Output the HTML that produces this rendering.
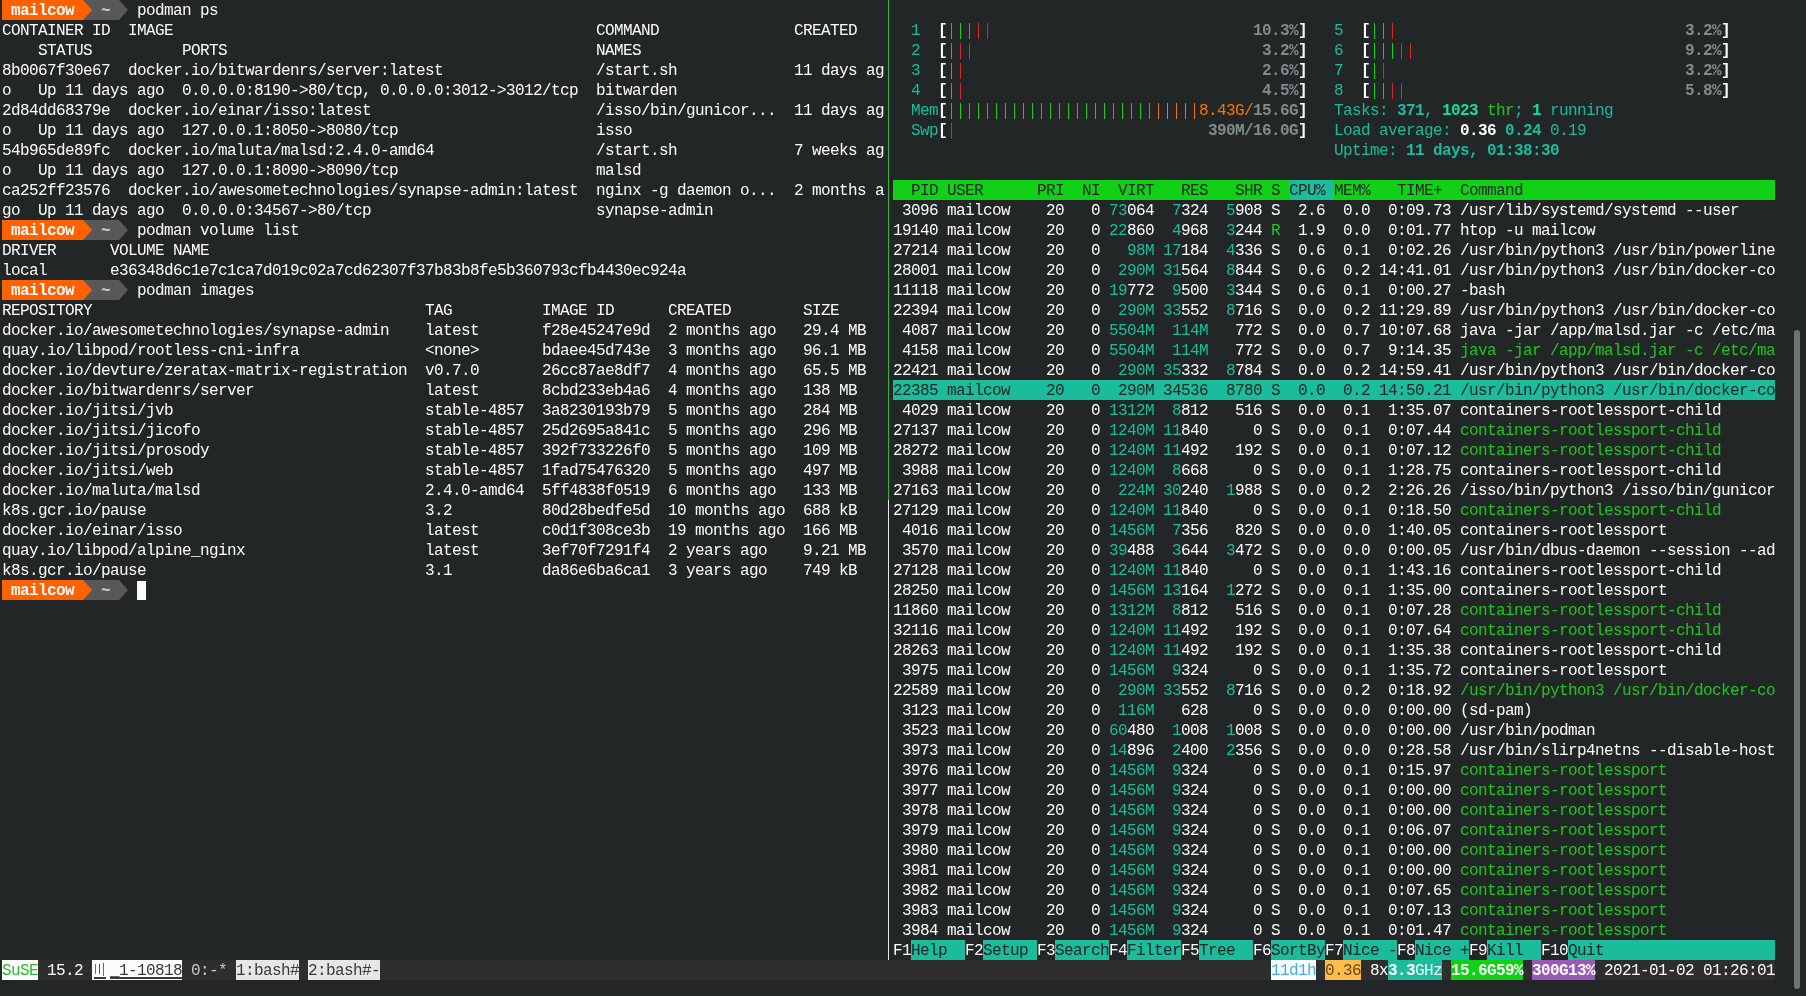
<!DOCTYPE html>
<html><head><meta charset="utf-8"><style>
html,body{margin:0;padding:0;background:#232627;width:1806px;height:996px;overflow:hidden}
body{position:relative;will-change:transform;font-family:"Liberation Mono",monospace;font-size:16px;letter-spacing:-0.6px;color:#fcfcfc}
i{position:absolute;height:20px;line-height:22px;white-space:pre;font-style:normal;overflow:visible}
b{position:absolute;display:block}
</style></head><body>
<b style="left:2px;top:0px;width:81px;height:20px;background:#ff6000"></b><i style="left:11px;top:0px;width:63px;font-weight:bold">mailcow</i><b style="left:83px;top:0px;width:36px;height:20px;background:#585858"></b><svg style="position:absolute;left:83px;top:0px" width="9" height="20"><polygon points="0,0 9,10 0,20" fill="#ff6000"/></svg><i style="left:101px;top:0px;width:9px;color:#d0d0d0;font-weight:bold">~</i><svg style="position:absolute;left:119px;top:0px" width="9" height="20"><polygon points="0,0 9,10 0,20" fill="#585858"/></svg><i style="left:137px;top:0px;width:81px">podman ps</i><i style="left:2px;top:20px;width:108px">CONTAINER ID</i><i style="left:128px;top:20px;width:45px">IMAGE</i><i style="left:596px;top:20px;width:63px">COMMAND</i><i style="left:794px;top:20px;width:63px">CREATED</i><i style="left:38px;top:40px;width:54px">STATUS</i><i style="left:182px;top:40px;width:45px">PORTS</i><i style="left:596px;top:40px;width:45px">NAMES</i><i style="left:2px;top:60px;width:108px">8b0067f30e67</i><i style="left:128px;top:60px;width:315px">docker.io/bitwardenrs/server:latest</i><i style="left:596px;top:60px;width:81px">/start.sh</i><i style="left:794px;top:60px;width:90px">11 days ag</i><i style="left:2px;top:80px;width:9px">o</i><i style="left:38px;top:80px;width:126px">Up 11 days ago</i><i style="left:182px;top:80px;width:396px">0.0.0.0:8190-&gt;80/tcp, 0.0.0.0:3012-&gt;3012/tcp</i><i style="left:596px;top:80px;width:81px">bitwarden</i><i style="left:2px;top:100px;width:108px">2d84dd68379e</i><i style="left:128px;top:100px;width:243px">docker.io/einar/isso:latest</i><i style="left:596px;top:100px;width:180px">/isso/bin/gunicor...</i><i style="left:794px;top:100px;width:90px">11 days ag</i><i style="left:2px;top:120px;width:9px">o</i><i style="left:38px;top:120px;width:126px">Up 11 days ago</i><i style="left:182px;top:120px;width:216px">127.0.0.1:8050-&gt;8080/tcp</i><i style="left:596px;top:120px;width:36px">isso</i><i style="left:2px;top:140px;width:108px">54b965de89fc</i><i style="left:128px;top:140px;width:306px">docker.io/maluta/malsd:2.4.0-amd64</i><i style="left:596px;top:140px;width:81px">/start.sh</i><i style="left:794px;top:140px;width:90px">7 weeks ag</i><i style="left:2px;top:160px;width:9px">o</i><i style="left:38px;top:160px;width:126px">Up 11 days ago</i><i style="left:182px;top:160px;width:216px">127.0.0.1:8090-&gt;8090/tcp</i><i style="left:596px;top:160px;width:45px">malsd</i><i style="left:2px;top:180px;width:108px">ca252ff23576</i><i style="left:128px;top:180px;width:450px">docker.io/awesometechnologies/synapse-admin:latest</i><i style="left:596px;top:180px;width:180px">nginx -g daemon o...</i><i style="left:794px;top:180px;width:90px">2 months a</i><i style="left:2px;top:200px;width:18px">go</i><i style="left:38px;top:200px;width:126px">Up 11 days ago</i><i style="left:182px;top:200px;width:189px">0.0.0.0:34567-&gt;80/tcp</i><i style="left:596px;top:200px;width:117px">synapse-admin</i><b style="left:2px;top:220px;width:81px;height:20px;background:#ff6000"></b><i style="left:11px;top:220px;width:63px;font-weight:bold">mailcow</i><b style="left:83px;top:220px;width:36px;height:20px;background:#585858"></b><svg style="position:absolute;left:83px;top:220px" width="9" height="20"><polygon points="0,0 9,10 0,20" fill="#ff6000"/></svg><i style="left:101px;top:220px;width:9px;color:#d0d0d0;font-weight:bold">~</i><svg style="position:absolute;left:119px;top:220px" width="9" height="20"><polygon points="0,0 9,10 0,20" fill="#585858"/></svg><i style="left:137px;top:220px;width:162px">podman volume list</i><i style="left:2px;top:240px;width:54px">DRIVER</i><i style="left:110px;top:240px;width:99px">VOLUME NAME</i><i style="left:2px;top:260px;width:45px">local</i><i style="left:110px;top:260px;width:576px">e36348d6c1e7c1ca7d019c02a7cd62307f37b83b8fe5b360793cfb4430ec924a</i><b style="left:2px;top:280px;width:81px;height:20px;background:#ff6000"></b><i style="left:11px;top:280px;width:63px;font-weight:bold">mailcow</i><b style="left:83px;top:280px;width:36px;height:20px;background:#585858"></b><svg style="position:absolute;left:83px;top:280px" width="9" height="20"><polygon points="0,0 9,10 0,20" fill="#ff6000"/></svg><i style="left:101px;top:280px;width:9px;color:#d0d0d0;font-weight:bold">~</i><svg style="position:absolute;left:119px;top:280px" width="9" height="20"><polygon points="0,0 9,10 0,20" fill="#585858"/></svg><i style="left:137px;top:280px;width:117px">podman images</i><i style="left:2px;top:300px;width:90px">REPOSITORY</i><i style="left:425px;top:300px;width:27px">TAG</i><i style="left:542px;top:300px;width:72px">IMAGE ID</i><i style="left:668px;top:300px;width:63px">CREATED</i><i style="left:803px;top:300px;width:36px">SIZE</i><i style="left:2px;top:320px;width:387px">docker.io/awesometechnologies/synapse-admin</i><i style="left:425px;top:320px;width:54px">latest</i><i style="left:542px;top:320px;width:108px">f28e45247e9d</i><i style="left:668px;top:320px;width:108px">2 months ago</i><i style="left:803px;top:320px;width:63px">29.4 MB</i><i style="left:2px;top:340px;width:297px">quay.io/libpod/rootless-cni-infra</i><i style="left:425px;top:340px;width:54px">&lt;none&gt;</i><i style="left:542px;top:340px;width:108px">bdaee45d743e</i><i style="left:668px;top:340px;width:108px">3 months ago</i><i style="left:803px;top:340px;width:63px">96.1 MB</i><i style="left:2px;top:360px;width:405px">docker.io/devture/zeratax-matrix-registration</i><i style="left:425px;top:360px;width:54px">v0.7.0</i><i style="left:542px;top:360px;width:108px">26cc87ae8df7</i><i style="left:668px;top:360px;width:108px">4 months ago</i><i style="left:803px;top:360px;width:63px">65.5 MB</i><i style="left:2px;top:380px;width:252px">docker.io/bitwardenrs/server</i><i style="left:425px;top:380px;width:54px">latest</i><i style="left:542px;top:380px;width:108px">8cbd233eb4a6</i><i style="left:668px;top:380px;width:108px">4 months ago</i><i style="left:803px;top:380px;width:54px">138 MB</i><i style="left:2px;top:400px;width:171px">docker.io/jitsi/jvb</i><i style="left:425px;top:400px;width:99px">stable-4857</i><i style="left:542px;top:400px;width:108px">3a8230193b79</i><i style="left:668px;top:400px;width:108px">5 months ago</i><i style="left:803px;top:400px;width:54px">284 MB</i><i style="left:2px;top:420px;width:198px">docker.io/jitsi/jicofo</i><i style="left:425px;top:420px;width:99px">stable-4857</i><i style="left:542px;top:420px;width:108px">25d2695a841c</i><i style="left:668px;top:420px;width:108px">5 months ago</i><i style="left:803px;top:420px;width:54px">296 MB</i><i style="left:2px;top:440px;width:207px">docker.io/jitsi/prosody</i><i style="left:425px;top:440px;width:99px">stable-4857</i><i style="left:542px;top:440px;width:108px">392f733226f0</i><i style="left:668px;top:440px;width:108px">5 months ago</i><i style="left:803px;top:440px;width:54px">109 MB</i><i style="left:2px;top:460px;width:171px">docker.io/jitsi/web</i><i style="left:425px;top:460px;width:99px">stable-4857</i><i style="left:542px;top:460px;width:108px">1fad75476320</i><i style="left:668px;top:460px;width:108px">5 months ago</i><i style="left:803px;top:460px;width:54px">497 MB</i><i style="left:2px;top:480px;width:198px">docker.io/maluta/malsd</i><i style="left:425px;top:480px;width:99px">2.4.0-amd64</i><i style="left:542px;top:480px;width:108px">5ff4838f0519</i><i style="left:668px;top:480px;width:108px">6 months ago</i><i style="left:803px;top:480px;width:54px">133 MB</i><i style="left:2px;top:500px;width:144px">k8s.gcr.io/pause</i><i style="left:425px;top:500px;width:27px">3.2</i><i style="left:542px;top:500px;width:108px">80d28bedfe5d</i><i style="left:668px;top:500px;width:117px">10 months ago</i><i style="left:803px;top:500px;width:54px">688 kB</i><i style="left:2px;top:520px;width:180px">docker.io/einar/isso</i><i style="left:425px;top:520px;width:54px">latest</i><i style="left:542px;top:520px;width:108px">c0d1f308ce3b</i><i style="left:668px;top:520px;width:117px">19 months ago</i><i style="left:803px;top:520px;width:54px">166 MB</i><i style="left:2px;top:540px;width:243px">quay.io/libpod/alpine_nginx</i><i style="left:425px;top:540px;width:54px">latest</i><i style="left:542px;top:540px;width:108px">3ef70f7291f4</i><i style="left:668px;top:540px;width:99px">2 years ago</i><i style="left:803px;top:540px;width:63px">9.21 MB</i><i style="left:2px;top:560px;width:144px">k8s.gcr.io/pause</i><i style="left:425px;top:560px;width:27px">3.1</i><i style="left:542px;top:560px;width:108px">da86e6ba6ca1</i><i style="left:668px;top:560px;width:99px">3 years ago</i><i style="left:803px;top:560px;width:54px">749 kB</i><b style="left:2px;top:580px;width:81px;height:20px;background:#ff6000"></b><i style="left:11px;top:580px;width:63px;font-weight:bold">mailcow</i><b style="left:83px;top:580px;width:36px;height:20px;background:#585858"></b><svg style="position:absolute;left:83px;top:580px" width="9" height="20"><polygon points="0,0 9,10 0,20" fill="#ff6000"/></svg><i style="left:101px;top:580px;width:9px;color:#d0d0d0;font-weight:bold">~</i><svg style="position:absolute;left:119px;top:580px" width="9" height="20"><polygon points="0,0 9,10 0,20" fill="#585858"/></svg><b style="left:137px;top:581px;width:9px;height:19px;background:#fcfcfc"></b><b style="left:888px;top:0px;width:1px;height:500px;background:#44a844"></b><b style="left:889px;top:0px;width:1px;height:500px;background:#0e4d0e"></b><b style="left:888px;top:500px;width:1px;height:460px;background:#e8e8e8"></b><i style="left:911px;top:20px;width:9px;color:#1abc9c">1</i><i style="left:938px;top:20px;width:9px;font-weight:bold">[</i><b style="left:951px;top:23px;width:1.3px;height:16px;background:#11d116"></b><b style="left:960px;top:23px;width:1.3px;height:16px;background:#11d116"></b><b style="left:969px;top:23px;width:1.3px;height:16px;background:#11d116"></b><b style="left:978px;top:23px;width:1.3px;height:16px;background:#d42a2a"></b><b style="left:987px;top:23px;width:1.3px;height:16px;background:#d42a2a"></b><i style="left:1253px;top:20px;width:45px;color:#7f8c8d;font-weight:bold">10.3%</i><i style="left:1298px;top:20px;width:9px;font-weight:bold">]</i><i style="left:911px;top:40px;width:9px;color:#1abc9c">2</i><i style="left:938px;top:40px;width:9px;font-weight:bold">[</i><b style="left:951px;top:43px;width:1.3px;height:16px;background:#11d116"></b><b style="left:960px;top:43px;width:1.3px;height:16px;background:#d42a2a"></b><b style="left:969px;top:43px;width:1.3px;height:16px;background:#d42a2a"></b><i style="left:1262px;top:40px;width:36px;color:#7f8c8d;font-weight:bold">3.2%</i><i style="left:1298px;top:40px;width:9px;font-weight:bold">]</i><i style="left:911px;top:60px;width:9px;color:#1abc9c">3</i><i style="left:938px;top:60px;width:9px;font-weight:bold">[</i><b style="left:951px;top:63px;width:1.3px;height:16px;background:#11d116"></b><b style="left:960px;top:63px;width:1.3px;height:16px;background:#d42a2a"></b><i style="left:1262px;top:60px;width:36px;color:#7f8c8d;font-weight:bold">2.6%</i><i style="left:1298px;top:60px;width:9px;font-weight:bold">]</i><i style="left:911px;top:80px;width:9px;color:#1abc9c">4</i><i style="left:938px;top:80px;width:9px;font-weight:bold">[</i><b style="left:951px;top:83px;width:1.3px;height:16px;background:#11d116"></b><b style="left:960px;top:83px;width:1.3px;height:16px;background:#d42a2a"></b><i style="left:1262px;top:80px;width:36px;color:#7f8c8d;font-weight:bold">4.5%</i><i style="left:1298px;top:80px;width:9px;font-weight:bold">]</i><i style="left:1334px;top:20px;width:9px;color:#1abc9c">5</i><i style="left:1361px;top:20px;width:9px;font-weight:bold">[</i><b style="left:1374px;top:23px;width:1.3px;height:16px;background:#11d116"></b><b style="left:1383px;top:23px;width:1.3px;height:16px;background:#11d116"></b><b style="left:1392px;top:23px;width:1.3px;height:16px;background:#d42a2a"></b><i style="left:1685px;top:20px;width:36px;color:#7f8c8d;font-weight:bold">3.2%</i><i style="left:1721px;top:20px;width:9px;font-weight:bold">]</i><i style="left:1334px;top:40px;width:9px;color:#1abc9c">6</i><i style="left:1361px;top:40px;width:9px;font-weight:bold">[</i><b style="left:1374px;top:43px;width:1.3px;height:16px;background:#11d116"></b><b style="left:1383px;top:43px;width:1.3px;height:16px;background:#11d116"></b><b style="left:1392px;top:43px;width:1.3px;height:16px;background:#11d116"></b><b style="left:1401px;top:43px;width:1.3px;height:16px;background:#d42a2a"></b><b style="left:1410px;top:43px;width:1.3px;height:16px;background:#d42a2a"></b><i style="left:1685px;top:40px;width:36px;color:#7f8c8d;font-weight:bold">9.2%</i><i style="left:1721px;top:40px;width:9px;font-weight:bold">]</i><i style="left:1334px;top:60px;width:9px;color:#1abc9c">7</i><i style="left:1361px;top:60px;width:9px;font-weight:bold">[</i><b style="left:1374px;top:63px;width:1.3px;height:16px;background:#11d116"></b><b style="left:1383px;top:63px;width:1.3px;height:16px;background:#d42a2a"></b><i style="left:1685px;top:60px;width:36px;color:#7f8c8d;font-weight:bold">3.2%</i><i style="left:1721px;top:60px;width:9px;font-weight:bold">]</i><i style="left:1334px;top:80px;width:9px;color:#1abc9c">8</i><i style="left:1361px;top:80px;width:9px;font-weight:bold">[</i><b style="left:1374px;top:83px;width:1.3px;height:16px;background:#11d116"></b><b style="left:1383px;top:83px;width:1.3px;height:16px;background:#11d116"></b><b style="left:1392px;top:83px;width:1.3px;height:16px;background:#d42a2a"></b><b style="left:1401px;top:83px;width:1.3px;height:16px;background:#d42a2a"></b><i style="left:1685px;top:80px;width:36px;color:#7f8c8d;font-weight:bold">5.8%</i><i style="left:1721px;top:80px;width:9px;font-weight:bold">]</i><i style="left:911px;top:100px;width:27px;color:#1abc9c">Mem</i><i style="left:938px;top:100px;width:9px;font-weight:bold">[</i><b style="left:951px;top:103px;width:1.3px;height:16px;background:#11d116"></b><b style="left:960px;top:103px;width:1.3px;height:16px;background:#11d116"></b><b style="left:969px;top:103px;width:1.3px;height:16px;background:#11d116"></b><b style="left:978px;top:103px;width:1.3px;height:16px;background:#11d116"></b><b style="left:987px;top:103px;width:1.3px;height:16px;background:#11d116"></b><b style="left:996px;top:103px;width:1.3px;height:16px;background:#11d116"></b><b style="left:1005px;top:103px;width:1.3px;height:16px;background:#11d116"></b><b style="left:1014px;top:103px;width:1.3px;height:16px;background:#11d116"></b><b style="left:1023px;top:103px;width:1.3px;height:16px;background:#11d116"></b><b style="left:1032px;top:103px;width:1.3px;height:16px;background:#11d116"></b><b style="left:1041px;top:103px;width:1.3px;height:16px;background:#11d116"></b><b style="left:1050px;top:103px;width:1.3px;height:16px;background:#11d116"></b><b style="left:1059px;top:103px;width:1.3px;height:16px;background:#11d116"></b><b style="left:1068px;top:103px;width:1.3px;height:16px;background:#11d116"></b><b style="left:1077px;top:103px;width:1.3px;height:16px;background:#11d116"></b><b style="left:1086px;top:103px;width:1.3px;height:16px;background:#11d116"></b><b style="left:1095px;top:103px;width:1.3px;height:16px;background:#11d116"></b><b style="left:1104px;top:103px;width:1.3px;height:16px;background:#11d116"></b><b style="left:1113px;top:103px;width:1.3px;height:16px;background:#11d116"></b><b style="left:1122px;top:103px;width:1.3px;height:16px;background:#11d116"></b><b style="left:1131px;top:103px;width:1.3px;height:16px;background:#11d116"></b><b style="left:1140px;top:103px;width:1.3px;height:16px;background:#11d116"></b><b style="left:1149px;top:103px;width:1.3px;height:16px;background:#1d99f3"></b><b style="left:1158px;top:103px;width:1.3px;height:16px;background:#f67400"></b><b style="left:1167px;top:103px;width:1.3px;height:16px;background:#f67400"></b><b style="left:1176px;top:103px;width:1.3px;height:16px;background:#f67400"></b><b style="left:1185px;top:103px;width:1.3px;height:16px;background:#f67400"></b><b style="left:1194px;top:103px;width:1.3px;height:16px;background:#f67400"></b><i style="left:1199px;top:100px;width:54px;color:#f67400">8.43G/</i><i style="left:1253px;top:100px;width:45px;color:#7f8c8d;font-weight:bold">15.6G</i><i style="left:1298px;top:100px;width:9px;font-weight:bold">]</i><i style="left:911px;top:120px;width:27px;color:#1abc9c">Swp</i><i style="left:938px;top:120px;width:9px;font-weight:bold">[</i><b style="left:951px;top:123px;width:1.3px;height:16px;background:#d42a2a"></b><i style="left:1208px;top:120px;width:90px;color:#7f8c8d;font-weight:bold">390M/16.0G</i><i style="left:1298px;top:120px;width:9px;font-weight:bold">]</i><i style="left:1334px;top:100px;width:63px;color:#1abc9c">Tasks: </i><i style="left:1397px;top:100px;width:27px;color:#1abc9c;font-weight:bold">371</i><i style="left:1424px;top:100px;width:18px;color:#1abc9c">, </i><i style="left:1442px;top:100px;width:36px;color:#1cdc9a;font-weight:bold">1023</i><i style="left:1478px;top:100px;width:36px;color:#22c422"> thr</i><i style="left:1514px;top:100px;width:18px;color:#1abc9c">; </i><i style="left:1532px;top:100px;width:9px;color:#1cdc9a;font-weight:bold">1</i><i style="left:1541px;top:100px;width:72px;color:#1abc9c"> running</i><i style="left:1334px;top:120px;width:126px;color:#1abc9c">Load average: </i><i style="left:1460px;top:120px;width:45px;font-weight:bold">0.36 </i><i style="left:1505px;top:120px;width:45px;color:#1abc9c;font-weight:bold">0.24 </i><i style="left:1550px;top:120px;width:36px;color:#1abc9c">0.19</i><i style="left:1334px;top:140px;width:72px;color:#1abc9c">Uptime: </i><i style="left:1406px;top:140px;width:153px;color:#1abc9c;font-weight:bold">11 days, 01:38:30</i><b style="left:893px;top:180px;width:882px;height:20px;background:#11d116"></b><b style="left:1289px;top:180px;width:45px;height:20px;background:#1abc9c"></b><i style="left:911px;top:180px;width:27px;color:#232627">PID</i><i style="left:947px;top:180px;width:36px;color:#232627">USER</i><i style="left:1037px;top:180px;width:27px;color:#232627">PRI</i><i style="left:1082px;top:180px;width:18px;color:#232627">NI</i><i style="left:1118px;top:180px;width:36px;color:#232627">VIRT</i><i style="left:1181px;top:180px;width:27px;color:#232627">RES</i><i style="left:1235px;top:180px;width:27px;color:#232627">SHR</i><i style="left:1271px;top:180px;width:9px;color:#232627">S</i><i style="left:1289px;top:180px;width:36px;color:#232627">CPU%</i><i style="left:1334px;top:180px;width:36px;color:#232627">MEM%</i><i style="left:1397px;top:180px;width:45px;color:#232627">TIME+</i><i style="left:1460px;top:180px;width:63px;color:#232627">Command</i><i style="left:902px;top:200px;width:36px">3096</i><i style="left:947px;top:200px;width:63px">mailcow</i><i style="left:1046px;top:200px;width:18px">20</i><i style="left:1091px;top:200px;width:9px">0</i><i style="left:1109px;top:200px;width:18px;color:#1abc9c">73</i><i style="left:1127px;top:200px;width:27px">064</i><i style="left:1172px;top:200px;width:9px;color:#1abc9c">7</i><i style="left:1181px;top:200px;width:27px">324</i><i style="left:1226px;top:200px;width:9px;color:#1abc9c">5</i><i style="left:1235px;top:200px;width:27px">908</i><i style="left:1271px;top:200px;width:9px">S</i><i style="left:1298px;top:200px;width:27px">2.6</i><i style="left:1343px;top:200px;width:27px">0.0</i><i style="left:1388px;top:200px;width:63px">0:09.73</i><i style="left:1460px;top:200px;width:279px">/usr/lib/systemd/systemd --user</i><i style="left:893px;top:220px;width:45px">19140</i><i style="left:947px;top:220px;width:63px">mailcow</i><i style="left:1046px;top:220px;width:18px">20</i><i style="left:1091px;top:220px;width:9px">0</i><i style="left:1109px;top:220px;width:18px;color:#1abc9c">22</i><i style="left:1127px;top:220px;width:27px">860</i><i style="left:1172px;top:220px;width:9px;color:#1abc9c">4</i><i style="left:1181px;top:220px;width:27px">968</i><i style="left:1226px;top:220px;width:9px;color:#1abc9c">3</i><i style="left:1235px;top:220px;width:27px">244</i><i style="left:1271px;top:220px;width:9px;color:#22c422">R</i><i style="left:1298px;top:220px;width:27px">1.9</i><i style="left:1343px;top:220px;width:27px">0.0</i><i style="left:1388px;top:220px;width:63px">0:01.77</i><i style="left:1460px;top:220px;width:135px">htop -u mailcow</i><i style="left:893px;top:240px;width:45px">27214</i><i style="left:947px;top:240px;width:63px">mailcow</i><i style="left:1046px;top:240px;width:18px">20</i><i style="left:1091px;top:240px;width:9px">0</i><i style="left:1127px;top:240px;width:27px;color:#1abc9c">98M</i><i style="left:1163px;top:240px;width:18px;color:#1abc9c">17</i><i style="left:1181px;top:240px;width:27px">184</i><i style="left:1226px;top:240px;width:9px;color:#1abc9c">4</i><i style="left:1235px;top:240px;width:27px">336</i><i style="left:1271px;top:240px;width:9px">S</i><i style="left:1298px;top:240px;width:27px">0.6</i><i style="left:1343px;top:240px;width:27px">0.1</i><i style="left:1388px;top:240px;width:63px">0:02.26</i><i style="left:1460px;top:240px;width:315px">/usr/bin/python3 /usr/bin/powerline</i><i style="left:893px;top:260px;width:45px">28001</i><i style="left:947px;top:260px;width:63px">mailcow</i><i style="left:1046px;top:260px;width:18px">20</i><i style="left:1091px;top:260px;width:9px">0</i><i style="left:1118px;top:260px;width:36px;color:#1abc9c">290M</i><i style="left:1163px;top:260px;width:18px;color:#1abc9c">31</i><i style="left:1181px;top:260px;width:27px">564</i><i style="left:1226px;top:260px;width:9px;color:#1abc9c">8</i><i style="left:1235px;top:260px;width:27px">844</i><i style="left:1271px;top:260px;width:9px">S</i><i style="left:1298px;top:260px;width:27px">0.6</i><i style="left:1343px;top:260px;width:27px">0.2</i><i style="left:1379px;top:260px;width:72px">14:41.01</i><i style="left:1460px;top:260px;width:315px">/usr/bin/python3 /usr/bin/docker-co</i><i style="left:893px;top:280px;width:45px">11118</i><i style="left:947px;top:280px;width:63px">mailcow</i><i style="left:1046px;top:280px;width:18px">20</i><i style="left:1091px;top:280px;width:9px">0</i><i style="left:1109px;top:280px;width:18px;color:#1abc9c">19</i><i style="left:1127px;top:280px;width:27px">772</i><i style="left:1172px;top:280px;width:9px;color:#1abc9c">9</i><i style="left:1181px;top:280px;width:27px">500</i><i style="left:1226px;top:280px;width:9px;color:#1abc9c">3</i><i style="left:1235px;top:280px;width:27px">344</i><i style="left:1271px;top:280px;width:9px">S</i><i style="left:1298px;top:280px;width:27px">0.6</i><i style="left:1343px;top:280px;width:27px">0.1</i><i style="left:1388px;top:280px;width:63px">0:00.27</i><i style="left:1460px;top:280px;width:45px">-bash</i><i style="left:893px;top:300px;width:45px">22394</i><i style="left:947px;top:300px;width:63px">mailcow</i><i style="left:1046px;top:300px;width:18px">20</i><i style="left:1091px;top:300px;width:9px">0</i><i style="left:1118px;top:300px;width:36px;color:#1abc9c">290M</i><i style="left:1163px;top:300px;width:18px;color:#1abc9c">33</i><i style="left:1181px;top:300px;width:27px">552</i><i style="left:1226px;top:300px;width:9px;color:#1abc9c">8</i><i style="left:1235px;top:300px;width:27px">716</i><i style="left:1271px;top:300px;width:9px">S</i><i style="left:1298px;top:300px;width:27px">0.0</i><i style="left:1343px;top:300px;width:27px">0.2</i><i style="left:1379px;top:300px;width:72px">11:29.89</i><i style="left:1460px;top:300px;width:315px">/usr/bin/python3 /usr/bin/docker-co</i><i style="left:902px;top:320px;width:36px">4087</i><i style="left:947px;top:320px;width:63px">mailcow</i><i style="left:1046px;top:320px;width:18px">20</i><i style="left:1091px;top:320px;width:9px">0</i><i style="left:1109px;top:320px;width:45px;color:#1abc9c">5504M</i><i style="left:1172px;top:320px;width:36px;color:#1abc9c">114M</i><i style="left:1235px;top:320px;width:27px">772</i><i style="left:1271px;top:320px;width:9px">S</i><i style="left:1298px;top:320px;width:27px">0.0</i><i style="left:1343px;top:320px;width:27px">0.7</i><i style="left:1379px;top:320px;width:72px">10:07.68</i><i style="left:1460px;top:320px;width:315px">java -jar /app/malsd.jar -c /etc/ma</i><i style="left:902px;top:340px;width:36px">4158</i><i style="left:947px;top:340px;width:63px">mailcow</i><i style="left:1046px;top:340px;width:18px">20</i><i style="left:1091px;top:340px;width:9px">0</i><i style="left:1109px;top:340px;width:45px;color:#1abc9c">5504M</i><i style="left:1172px;top:340px;width:36px;color:#1abc9c">114M</i><i style="left:1235px;top:340px;width:27px">772</i><i style="left:1271px;top:340px;width:9px">S</i><i style="left:1298px;top:340px;width:27px">0.0</i><i style="left:1343px;top:340px;width:27px">0.7</i><i style="left:1388px;top:340px;width:63px">9:14.35</i><i style="left:1460px;top:340px;width:315px;color:#22c422">java -jar /app/malsd.jar -c /etc/ma</i><i style="left:893px;top:360px;width:45px">22421</i><i style="left:947px;top:360px;width:63px">mailcow</i><i style="left:1046px;top:360px;width:18px">20</i><i style="left:1091px;top:360px;width:9px">0</i><i style="left:1118px;top:360px;width:36px;color:#1abc9c">290M</i><i style="left:1163px;top:360px;width:18px;color:#1abc9c">35</i><i style="left:1181px;top:360px;width:27px">332</i><i style="left:1226px;top:360px;width:9px;color:#1abc9c">8</i><i style="left:1235px;top:360px;width:27px">784</i><i style="left:1271px;top:360px;width:9px">S</i><i style="left:1298px;top:360px;width:27px">0.0</i><i style="left:1343px;top:360px;width:27px">0.2</i><i style="left:1379px;top:360px;width:72px">14:59.41</i><i style="left:1460px;top:360px;width:315px">/usr/bin/python3 /usr/bin/docker-co</i><b style="left:893px;top:380px;width:882px;height:20px;background:#1abc9c"></b><i style="left:893px;top:380px;width:45px;color:#232627">22385</i><i style="left:947px;top:380px;width:63px;color:#232627">mailcow</i><i style="left:1046px;top:380px;width:18px;color:#232627">20</i><i style="left:1091px;top:380px;width:9px;color:#232627">0</i><i style="left:1118px;top:380px;width:36px;color:#232627">290M</i><i style="left:1163px;top:380px;width:18px;color:#232627">34</i><i style="left:1181px;top:380px;width:27px;color:#232627">536</i><i style="left:1226px;top:380px;width:9px;color:#232627">8</i><i style="left:1235px;top:380px;width:27px;color:#232627">780</i><i style="left:1271px;top:380px;width:9px;color:#232627">S</i><i style="left:1298px;top:380px;width:27px;color:#232627">0.0</i><i style="left:1343px;top:380px;width:27px;color:#232627">0.2</i><i style="left:1379px;top:380px;width:72px;color:#232627">14:50.21</i><i style="left:1460px;top:380px;width:315px;color:#232627">/usr/bin/python3 /usr/bin/docker-co</i><i style="left:902px;top:400px;width:36px">4029</i><i style="left:947px;top:400px;width:63px">mailcow</i><i style="left:1046px;top:400px;width:18px">20</i><i style="left:1091px;top:400px;width:9px">0</i><i style="left:1109px;top:400px;width:45px;color:#1abc9c">1312M</i><i style="left:1172px;top:400px;width:9px;color:#1abc9c">8</i><i style="left:1181px;top:400px;width:27px">812</i><i style="left:1235px;top:400px;width:27px">516</i><i style="left:1271px;top:400px;width:9px">S</i><i style="left:1298px;top:400px;width:27px">0.0</i><i style="left:1343px;top:400px;width:27px">0.1</i><i style="left:1388px;top:400px;width:63px">1:35.07</i><i style="left:1460px;top:400px;width:261px">containers-rootlessport-child</i><i style="left:893px;top:420px;width:45px">27137</i><i style="left:947px;top:420px;width:63px">mailcow</i><i style="left:1046px;top:420px;width:18px">20</i><i style="left:1091px;top:420px;width:9px">0</i><i style="left:1109px;top:420px;width:45px;color:#1abc9c">1240M</i><i style="left:1163px;top:420px;width:18px;color:#1abc9c">11</i><i style="left:1181px;top:420px;width:27px">840</i><i style="left:1253px;top:420px;width:9px">0</i><i style="left:1271px;top:420px;width:9px">S</i><i style="left:1298px;top:420px;width:27px">0.0</i><i style="left:1343px;top:420px;width:27px">0.1</i><i style="left:1388px;top:420px;width:63px">0:07.44</i><i style="left:1460px;top:420px;width:261px;color:#22c422">containers-rootlessport-child</i><i style="left:893px;top:440px;width:45px">28272</i><i style="left:947px;top:440px;width:63px">mailcow</i><i style="left:1046px;top:440px;width:18px">20</i><i style="left:1091px;top:440px;width:9px">0</i><i style="left:1109px;top:440px;width:45px;color:#1abc9c">1240M</i><i style="left:1163px;top:440px;width:18px;color:#1abc9c">11</i><i style="left:1181px;top:440px;width:27px">492</i><i style="left:1235px;top:440px;width:27px">192</i><i style="left:1271px;top:440px;width:9px">S</i><i style="left:1298px;top:440px;width:27px">0.0</i><i style="left:1343px;top:440px;width:27px">0.1</i><i style="left:1388px;top:440px;width:63px">0:07.12</i><i style="left:1460px;top:440px;width:261px;color:#22c422">containers-rootlessport-child</i><i style="left:902px;top:460px;width:36px">3988</i><i style="left:947px;top:460px;width:63px">mailcow</i><i style="left:1046px;top:460px;width:18px">20</i><i style="left:1091px;top:460px;width:9px">0</i><i style="left:1109px;top:460px;width:45px;color:#1abc9c">1240M</i><i style="left:1172px;top:460px;width:9px;color:#1abc9c">8</i><i style="left:1181px;top:460px;width:27px">668</i><i style="left:1253px;top:460px;width:9px">0</i><i style="left:1271px;top:460px;width:9px">S</i><i style="left:1298px;top:460px;width:27px">0.0</i><i style="left:1343px;top:460px;width:27px">0.1</i><i style="left:1388px;top:460px;width:63px">1:28.75</i><i style="left:1460px;top:460px;width:261px">containers-rootlessport-child</i><i style="left:893px;top:480px;width:45px">27163</i><i style="left:947px;top:480px;width:63px">mailcow</i><i style="left:1046px;top:480px;width:18px">20</i><i style="left:1091px;top:480px;width:9px">0</i><i style="left:1118px;top:480px;width:36px;color:#1abc9c">224M</i><i style="left:1163px;top:480px;width:18px;color:#1abc9c">30</i><i style="left:1181px;top:480px;width:27px">240</i><i style="left:1226px;top:480px;width:9px;color:#1abc9c">1</i><i style="left:1235px;top:480px;width:27px">988</i><i style="left:1271px;top:480px;width:9px">S</i><i style="left:1298px;top:480px;width:27px">0.0</i><i style="left:1343px;top:480px;width:27px">0.2</i><i style="left:1388px;top:480px;width:63px">2:26.26</i><i style="left:1460px;top:480px;width:315px">/isso/bin/python3 /isso/bin/gunicor</i><i style="left:893px;top:500px;width:45px">27129</i><i style="left:947px;top:500px;width:63px">mailcow</i><i style="left:1046px;top:500px;width:18px">20</i><i style="left:1091px;top:500px;width:9px">0</i><i style="left:1109px;top:500px;width:45px;color:#1abc9c">1240M</i><i style="left:1163px;top:500px;width:18px;color:#1abc9c">11</i><i style="left:1181px;top:500px;width:27px">840</i><i style="left:1253px;top:500px;width:9px">0</i><i style="left:1271px;top:500px;width:9px">S</i><i style="left:1298px;top:500px;width:27px">0.0</i><i style="left:1343px;top:500px;width:27px">0.1</i><i style="left:1388px;top:500px;width:63px">0:18.50</i><i style="left:1460px;top:500px;width:261px;color:#22c422">containers-rootlessport-child</i><i style="left:902px;top:520px;width:36px">4016</i><i style="left:947px;top:520px;width:63px">mailcow</i><i style="left:1046px;top:520px;width:18px">20</i><i style="left:1091px;top:520px;width:9px">0</i><i style="left:1109px;top:520px;width:45px;color:#1abc9c">1456M</i><i style="left:1172px;top:520px;width:9px;color:#1abc9c">7</i><i style="left:1181px;top:520px;width:27px">356</i><i style="left:1235px;top:520px;width:27px">820</i><i style="left:1271px;top:520px;width:9px">S</i><i style="left:1298px;top:520px;width:27px">0.0</i><i style="left:1343px;top:520px;width:27px">0.0</i><i style="left:1388px;top:520px;width:63px">1:40.05</i><i style="left:1460px;top:520px;width:207px">containers-rootlessport</i><i style="left:902px;top:540px;width:36px">3570</i><i style="left:947px;top:540px;width:63px">mailcow</i><i style="left:1046px;top:540px;width:18px">20</i><i style="left:1091px;top:540px;width:9px">0</i><i style="left:1109px;top:540px;width:18px;color:#1abc9c">39</i><i style="left:1127px;top:540px;width:27px">488</i><i style="left:1172px;top:540px;width:9px;color:#1abc9c">3</i><i style="left:1181px;top:540px;width:27px">644</i><i style="left:1226px;top:540px;width:9px;color:#1abc9c">3</i><i style="left:1235px;top:540px;width:27px">472</i><i style="left:1271px;top:540px;width:9px">S</i><i style="left:1298px;top:540px;width:27px">0.0</i><i style="left:1343px;top:540px;width:27px">0.0</i><i style="left:1388px;top:540px;width:63px">0:00.05</i><i style="left:1460px;top:540px;width:315px">/usr/bin/dbus-daemon --session --ad</i><i style="left:893px;top:560px;width:45px">27128</i><i style="left:947px;top:560px;width:63px">mailcow</i><i style="left:1046px;top:560px;width:18px">20</i><i style="left:1091px;top:560px;width:9px">0</i><i style="left:1109px;top:560px;width:45px;color:#1abc9c">1240M</i><i style="left:1163px;top:560px;width:18px;color:#1abc9c">11</i><i style="left:1181px;top:560px;width:27px">840</i><i style="left:1253px;top:560px;width:9px">0</i><i style="left:1271px;top:560px;width:9px">S</i><i style="left:1298px;top:560px;width:27px">0.0</i><i style="left:1343px;top:560px;width:27px">0.1</i><i style="left:1388px;top:560px;width:63px">1:43.16</i><i style="left:1460px;top:560px;width:261px">containers-rootlessport-child</i><i style="left:893px;top:580px;width:45px">28250</i><i style="left:947px;top:580px;width:63px">mailcow</i><i style="left:1046px;top:580px;width:18px">20</i><i style="left:1091px;top:580px;width:9px">0</i><i style="left:1109px;top:580px;width:45px;color:#1abc9c">1456M</i><i style="left:1163px;top:580px;width:18px;color:#1abc9c">13</i><i style="left:1181px;top:580px;width:27px">164</i><i style="left:1226px;top:580px;width:9px;color:#1abc9c">1</i><i style="left:1235px;top:580px;width:27px">272</i><i style="left:1271px;top:580px;width:9px">S</i><i style="left:1298px;top:580px;width:27px">0.0</i><i style="left:1343px;top:580px;width:27px">0.1</i><i style="left:1388px;top:580px;width:63px">1:35.00</i><i style="left:1460px;top:580px;width:207px">containers-rootlessport</i><i style="left:893px;top:600px;width:45px">11860</i><i style="left:947px;top:600px;width:63px">mailcow</i><i style="left:1046px;top:600px;width:18px">20</i><i style="left:1091px;top:600px;width:9px">0</i><i style="left:1109px;top:600px;width:45px;color:#1abc9c">1312M</i><i style="left:1172px;top:600px;width:9px;color:#1abc9c">8</i><i style="left:1181px;top:600px;width:27px">812</i><i style="left:1235px;top:600px;width:27px">516</i><i style="left:1271px;top:600px;width:9px">S</i><i style="left:1298px;top:600px;width:27px">0.0</i><i style="left:1343px;top:600px;width:27px">0.1</i><i style="left:1388px;top:600px;width:63px">0:07.28</i><i style="left:1460px;top:600px;width:261px;color:#22c422">containers-rootlessport-child</i><i style="left:893px;top:620px;width:45px">32116</i><i style="left:947px;top:620px;width:63px">mailcow</i><i style="left:1046px;top:620px;width:18px">20</i><i style="left:1091px;top:620px;width:9px">0</i><i style="left:1109px;top:620px;width:45px;color:#1abc9c">1240M</i><i style="left:1163px;top:620px;width:18px;color:#1abc9c">11</i><i style="left:1181px;top:620px;width:27px">492</i><i style="left:1235px;top:620px;width:27px">192</i><i style="left:1271px;top:620px;width:9px">S</i><i style="left:1298px;top:620px;width:27px">0.0</i><i style="left:1343px;top:620px;width:27px">0.1</i><i style="left:1388px;top:620px;width:63px">0:07.64</i><i style="left:1460px;top:620px;width:261px;color:#22c422">containers-rootlessport-child</i><i style="left:893px;top:640px;width:45px">28263</i><i style="left:947px;top:640px;width:63px">mailcow</i><i style="left:1046px;top:640px;width:18px">20</i><i style="left:1091px;top:640px;width:9px">0</i><i style="left:1109px;top:640px;width:45px;color:#1abc9c">1240M</i><i style="left:1163px;top:640px;width:18px;color:#1abc9c">11</i><i style="left:1181px;top:640px;width:27px">492</i><i style="left:1235px;top:640px;width:27px">192</i><i style="left:1271px;top:640px;width:9px">S</i><i style="left:1298px;top:640px;width:27px">0.0</i><i style="left:1343px;top:640px;width:27px">0.1</i><i style="left:1388px;top:640px;width:63px">1:35.38</i><i style="left:1460px;top:640px;width:261px">containers-rootlessport-child</i><i style="left:902px;top:660px;width:36px">3975</i><i style="left:947px;top:660px;width:63px">mailcow</i><i style="left:1046px;top:660px;width:18px">20</i><i style="left:1091px;top:660px;width:9px">0</i><i style="left:1109px;top:660px;width:45px;color:#1abc9c">1456M</i><i style="left:1172px;top:660px;width:9px;color:#1abc9c">9</i><i style="left:1181px;top:660px;width:27px">324</i><i style="left:1253px;top:660px;width:9px">0</i><i style="left:1271px;top:660px;width:9px">S</i><i style="left:1298px;top:660px;width:27px">0.0</i><i style="left:1343px;top:660px;width:27px">0.1</i><i style="left:1388px;top:660px;width:63px">1:35.72</i><i style="left:1460px;top:660px;width:207px">containers-rootlessport</i><i style="left:893px;top:680px;width:45px">22589</i><i style="left:947px;top:680px;width:63px">mailcow</i><i style="left:1046px;top:680px;width:18px">20</i><i style="left:1091px;top:680px;width:9px">0</i><i style="left:1118px;top:680px;width:36px;color:#1abc9c">290M</i><i style="left:1163px;top:680px;width:18px;color:#1abc9c">33</i><i style="left:1181px;top:680px;width:27px">552</i><i style="left:1226px;top:680px;width:9px;color:#1abc9c">8</i><i style="left:1235px;top:680px;width:27px">716</i><i style="left:1271px;top:680px;width:9px">S</i><i style="left:1298px;top:680px;width:27px">0.0</i><i style="left:1343px;top:680px;width:27px">0.2</i><i style="left:1388px;top:680px;width:63px">0:18.92</i><i style="left:1460px;top:680px;width:315px;color:#22c422">/usr/bin/python3 /usr/bin/docker-co</i><i style="left:902px;top:700px;width:36px">3123</i><i style="left:947px;top:700px;width:63px">mailcow</i><i style="left:1046px;top:700px;width:18px">20</i><i style="left:1091px;top:700px;width:9px">0</i><i style="left:1118px;top:700px;width:36px;color:#1abc9c">116M</i><i style="left:1181px;top:700px;width:27px">628</i><i style="left:1253px;top:700px;width:9px">0</i><i style="left:1271px;top:700px;width:9px">S</i><i style="left:1298px;top:700px;width:27px">0.0</i><i style="left:1343px;top:700px;width:27px">0.0</i><i style="left:1388px;top:700px;width:63px">0:00.00</i><i style="left:1460px;top:700px;width:72px">(sd-pam)</i><i style="left:902px;top:720px;width:36px">3523</i><i style="left:947px;top:720px;width:63px">mailcow</i><i style="left:1046px;top:720px;width:18px">20</i><i style="left:1091px;top:720px;width:9px">0</i><i style="left:1109px;top:720px;width:18px;color:#1abc9c">60</i><i style="left:1127px;top:720px;width:27px">480</i><i style="left:1172px;top:720px;width:9px;color:#1abc9c">1</i><i style="left:1181px;top:720px;width:27px">008</i><i style="left:1226px;top:720px;width:9px;color:#1abc9c">1</i><i style="left:1235px;top:720px;width:27px">008</i><i style="left:1271px;top:720px;width:9px">S</i><i style="left:1298px;top:720px;width:27px">0.0</i><i style="left:1343px;top:720px;width:27px">0.0</i><i style="left:1388px;top:720px;width:63px">0:00.00</i><i style="left:1460px;top:720px;width:135px">/usr/bin/podman</i><i style="left:902px;top:740px;width:36px">3973</i><i style="left:947px;top:740px;width:63px">mailcow</i><i style="left:1046px;top:740px;width:18px">20</i><i style="left:1091px;top:740px;width:9px">0</i><i style="left:1109px;top:740px;width:18px;color:#1abc9c">14</i><i style="left:1127px;top:740px;width:27px">896</i><i style="left:1172px;top:740px;width:9px;color:#1abc9c">2</i><i style="left:1181px;top:740px;width:27px">400</i><i style="left:1226px;top:740px;width:9px;color:#1abc9c">2</i><i style="left:1235px;top:740px;width:27px">356</i><i style="left:1271px;top:740px;width:9px">S</i><i style="left:1298px;top:740px;width:27px">0.0</i><i style="left:1343px;top:740px;width:27px">0.0</i><i style="left:1388px;top:740px;width:63px">0:28.58</i><i style="left:1460px;top:740px;width:315px">/usr/bin/slirp4netns --disable-host</i><i style="left:902px;top:760px;width:36px">3976</i><i style="left:947px;top:760px;width:63px">mailcow</i><i style="left:1046px;top:760px;width:18px">20</i><i style="left:1091px;top:760px;width:9px">0</i><i style="left:1109px;top:760px;width:45px;color:#1abc9c">1456M</i><i style="left:1172px;top:760px;width:9px;color:#1abc9c">9</i><i style="left:1181px;top:760px;width:27px">324</i><i style="left:1253px;top:760px;width:9px">0</i><i style="left:1271px;top:760px;width:9px">S</i><i style="left:1298px;top:760px;width:27px">0.0</i><i style="left:1343px;top:760px;width:27px">0.1</i><i style="left:1388px;top:760px;width:63px">0:15.97</i><i style="left:1460px;top:760px;width:207px;color:#22c422">containers-rootlessport</i><i style="left:902px;top:780px;width:36px">3977</i><i style="left:947px;top:780px;width:63px">mailcow</i><i style="left:1046px;top:780px;width:18px">20</i><i style="left:1091px;top:780px;width:9px">0</i><i style="left:1109px;top:780px;width:45px;color:#1abc9c">1456M</i><i style="left:1172px;top:780px;width:9px;color:#1abc9c">9</i><i style="left:1181px;top:780px;width:27px">324</i><i style="left:1253px;top:780px;width:9px">0</i><i style="left:1271px;top:780px;width:9px">S</i><i style="left:1298px;top:780px;width:27px">0.0</i><i style="left:1343px;top:780px;width:27px">0.1</i><i style="left:1388px;top:780px;width:63px">0:00.00</i><i style="left:1460px;top:780px;width:207px;color:#22c422">containers-rootlessport</i><i style="left:902px;top:800px;width:36px">3978</i><i style="left:947px;top:800px;width:63px">mailcow</i><i style="left:1046px;top:800px;width:18px">20</i><i style="left:1091px;top:800px;width:9px">0</i><i style="left:1109px;top:800px;width:45px;color:#1abc9c">1456M</i><i style="left:1172px;top:800px;width:9px;color:#1abc9c">9</i><i style="left:1181px;top:800px;width:27px">324</i><i style="left:1253px;top:800px;width:9px">0</i><i style="left:1271px;top:800px;width:9px">S</i><i style="left:1298px;top:800px;width:27px">0.0</i><i style="left:1343px;top:800px;width:27px">0.1</i><i style="left:1388px;top:800px;width:63px">0:00.00</i><i style="left:1460px;top:800px;width:207px;color:#22c422">containers-rootlessport</i><i style="left:902px;top:820px;width:36px">3979</i><i style="left:947px;top:820px;width:63px">mailcow</i><i style="left:1046px;top:820px;width:18px">20</i><i style="left:1091px;top:820px;width:9px">0</i><i style="left:1109px;top:820px;width:45px;color:#1abc9c">1456M</i><i style="left:1172px;top:820px;width:9px;color:#1abc9c">9</i><i style="left:1181px;top:820px;width:27px">324</i><i style="left:1253px;top:820px;width:9px">0</i><i style="left:1271px;top:820px;width:9px">S</i><i style="left:1298px;top:820px;width:27px">0.0</i><i style="left:1343px;top:820px;width:27px">0.1</i><i style="left:1388px;top:820px;width:63px">0:06.07</i><i style="left:1460px;top:820px;width:207px;color:#22c422">containers-rootlessport</i><i style="left:902px;top:840px;width:36px">3980</i><i style="left:947px;top:840px;width:63px">mailcow</i><i style="left:1046px;top:840px;width:18px">20</i><i style="left:1091px;top:840px;width:9px">0</i><i style="left:1109px;top:840px;width:45px;color:#1abc9c">1456M</i><i style="left:1172px;top:840px;width:9px;color:#1abc9c">9</i><i style="left:1181px;top:840px;width:27px">324</i><i style="left:1253px;top:840px;width:9px">0</i><i style="left:1271px;top:840px;width:9px">S</i><i style="left:1298px;top:840px;width:27px">0.0</i><i style="left:1343px;top:840px;width:27px">0.1</i><i style="left:1388px;top:840px;width:63px">0:00.00</i><i style="left:1460px;top:840px;width:207px;color:#22c422">containers-rootlessport</i><i style="left:902px;top:860px;width:36px">3981</i><i style="left:947px;top:860px;width:63px">mailcow</i><i style="left:1046px;top:860px;width:18px">20</i><i style="left:1091px;top:860px;width:9px">0</i><i style="left:1109px;top:860px;width:45px;color:#1abc9c">1456M</i><i style="left:1172px;top:860px;width:9px;color:#1abc9c">9</i><i style="left:1181px;top:860px;width:27px">324</i><i style="left:1253px;top:860px;width:9px">0</i><i style="left:1271px;top:860px;width:9px">S</i><i style="left:1298px;top:860px;width:27px">0.0</i><i style="left:1343px;top:860px;width:27px">0.1</i><i style="left:1388px;top:860px;width:63px">0:00.00</i><i style="left:1460px;top:860px;width:207px;color:#22c422">containers-rootlessport</i><i style="left:902px;top:880px;width:36px">3982</i><i style="left:947px;top:880px;width:63px">mailcow</i><i style="left:1046px;top:880px;width:18px">20</i><i style="left:1091px;top:880px;width:9px">0</i><i style="left:1109px;top:880px;width:45px;color:#1abc9c">1456M</i><i style="left:1172px;top:880px;width:9px;color:#1abc9c">9</i><i style="left:1181px;top:880px;width:27px">324</i><i style="left:1253px;top:880px;width:9px">0</i><i style="left:1271px;top:880px;width:9px">S</i><i style="left:1298px;top:880px;width:27px">0.0</i><i style="left:1343px;top:880px;width:27px">0.1</i><i style="left:1388px;top:880px;width:63px">0:07.65</i><i style="left:1460px;top:880px;width:207px;color:#22c422">containers-rootlessport</i><i style="left:902px;top:900px;width:36px">3983</i><i style="left:947px;top:900px;width:63px">mailcow</i><i style="left:1046px;top:900px;width:18px">20</i><i style="left:1091px;top:900px;width:9px">0</i><i style="left:1109px;top:900px;width:45px;color:#1abc9c">1456M</i><i style="left:1172px;top:900px;width:9px;color:#1abc9c">9</i><i style="left:1181px;top:900px;width:27px">324</i><i style="left:1253px;top:900px;width:9px">0</i><i style="left:1271px;top:900px;width:9px">S</i><i style="left:1298px;top:900px;width:27px">0.0</i><i style="left:1343px;top:900px;width:27px">0.1</i><i style="left:1388px;top:900px;width:63px">0:07.13</i><i style="left:1460px;top:900px;width:207px;color:#22c422">containers-rootlessport</i><i style="left:902px;top:920px;width:36px">3984</i><i style="left:947px;top:920px;width:63px">mailcow</i><i style="left:1046px;top:920px;width:18px">20</i><i style="left:1091px;top:920px;width:9px">0</i><i style="left:1109px;top:920px;width:45px;color:#1abc9c">1456M</i><i style="left:1172px;top:920px;width:9px;color:#1abc9c">9</i><i style="left:1181px;top:920px;width:27px">324</i><i style="left:1253px;top:920px;width:9px">0</i><i style="left:1271px;top:920px;width:9px">S</i><i style="left:1298px;top:920px;width:27px">0.0</i><i style="left:1343px;top:920px;width:27px">0.1</i><i style="left:1388px;top:920px;width:63px">0:01.47</i><i style="left:1460px;top:920px;width:207px;color:#22c422">containers-rootlessport</i><i style="left:893px;top:940px;width:18px">F1</i><b style="left:911px;top:940px;width:54px;height:20px;background:#1abc9c"></b><i style="left:911px;top:940px;width:36px;color:#232627">Help</i><i style="left:965px;top:940px;width:18px">F2</i><b style="left:983px;top:940px;width:54px;height:20px;background:#1abc9c"></b><i style="left:983px;top:940px;width:45px;color:#232627">Setup</i><i style="left:1037px;top:940px;width:18px">F3</i><b style="left:1055px;top:940px;width:54px;height:20px;background:#1abc9c"></b><i style="left:1055px;top:940px;width:54px;color:#232627">Search</i><i style="left:1109px;top:940px;width:18px">F4</i><b style="left:1127px;top:940px;width:54px;height:20px;background:#1abc9c"></b><i style="left:1127px;top:940px;width:54px;color:#232627">Filter</i><i style="left:1181px;top:940px;width:18px">F5</i><b style="left:1199px;top:940px;width:54px;height:20px;background:#1abc9c"></b><i style="left:1199px;top:940px;width:36px;color:#232627">Tree</i><i style="left:1253px;top:940px;width:18px">F6</i><b style="left:1271px;top:940px;width:54px;height:20px;background:#1abc9c"></b><i style="left:1271px;top:940px;width:54px;color:#232627">SortBy</i><i style="left:1325px;top:940px;width:18px">F7</i><b style="left:1343px;top:940px;width:54px;height:20px;background:#1abc9c"></b><i style="left:1343px;top:940px;width:54px;color:#232627">Nice -</i><i style="left:1397px;top:940px;width:18px">F8</i><b style="left:1415px;top:940px;width:54px;height:20px;background:#1abc9c"></b><i style="left:1415px;top:940px;width:54px;color:#232627">Nice +</i><i style="left:1469px;top:940px;width:18px">F9</i><b style="left:1487px;top:940px;width:54px;height:20px;background:#1abc9c"></b><i style="left:1487px;top:940px;width:36px;color:#232627">Kill</i><i style="left:1541px;top:940px;width:27px">F10</i><b style="left:1568px;top:940px;width:207px;height:20px;background:#1abc9c"></b><i style="left:1568px;top:940px;width:36px;color:#232627">Quit</i><b style="left:2px;top:960px;width:1773px;height:20px;background:#2e2e2e"></b><i style="left:2px;top:960px;width:36px;color:#2fb82f;background:#fcfcfc">SuSE</i><i style="left:47px;top:960px;width:36px">15.2</i><b style="left:92px;top:960px;width:90px;height:20px;background:#fcfcfc"></b><i style="left:110px;top:960px;width:72px;color:#3a3a3a">_1-10818</i><b style="left:95px;top:964px;width:1.3px;height:10px;background:#7a6a5a"></b><b style="left:99px;top:964px;width:1.3px;height:10px;background:#555555"></b><b style="left:103px;top:963px;width:1.3px;height:13px;background:#7a5a7a"></b><b style="left:94px;top:977px;width:12px;height:2px;background:#3a3a3a"></b><b style="left:110px;top:977px;width:72px;height:2px;background:#3a3a3a"></b><i style="left:191px;top:960px;width:36px;color:#c8c8c8">0:-*</i><i style="left:236px;top:960px;width:63px;color:#3a3a3a;background:#e6e6e6">1:bash#</i><i style="left:308px;top:960px;width:72px;color:#3a3a3a;background:#e6e6e6">2:bash#-</i><i style="left:1271px;top:960px;width:45px;color:#3daee9;background:#fcfcfc">11d1h</i><i style="left:1325px;top:960px;width:36px;color:#6a4a10;background:#fdbc4b">0.36</i><i style="left:1370px;top:960px;width:18px">8x</i><b style="left:1388px;top:960px;width:54px;height:20px;background:#1abc9c"></b><i style="left:1388px;top:960px;width:27px;font-weight:bold">3.3</i><i style="left:1415px;top:960px;width:27px">GHz</i><i style="left:1451px;top:960px;width:72px;background:#11d116;font-weight:bold">15.6G59%</i><i style="left:1532px;top:960px;width:63px;background:#9b59b6;font-weight:bold">300G13%</i><i style="left:1604px;top:960px;width:171px">2021-01-02 01:26:01</i><b style="left:1794px;top:330px;width:6px;height:659px;background:#707273;border-radius:3px"></b>
</body></html>
